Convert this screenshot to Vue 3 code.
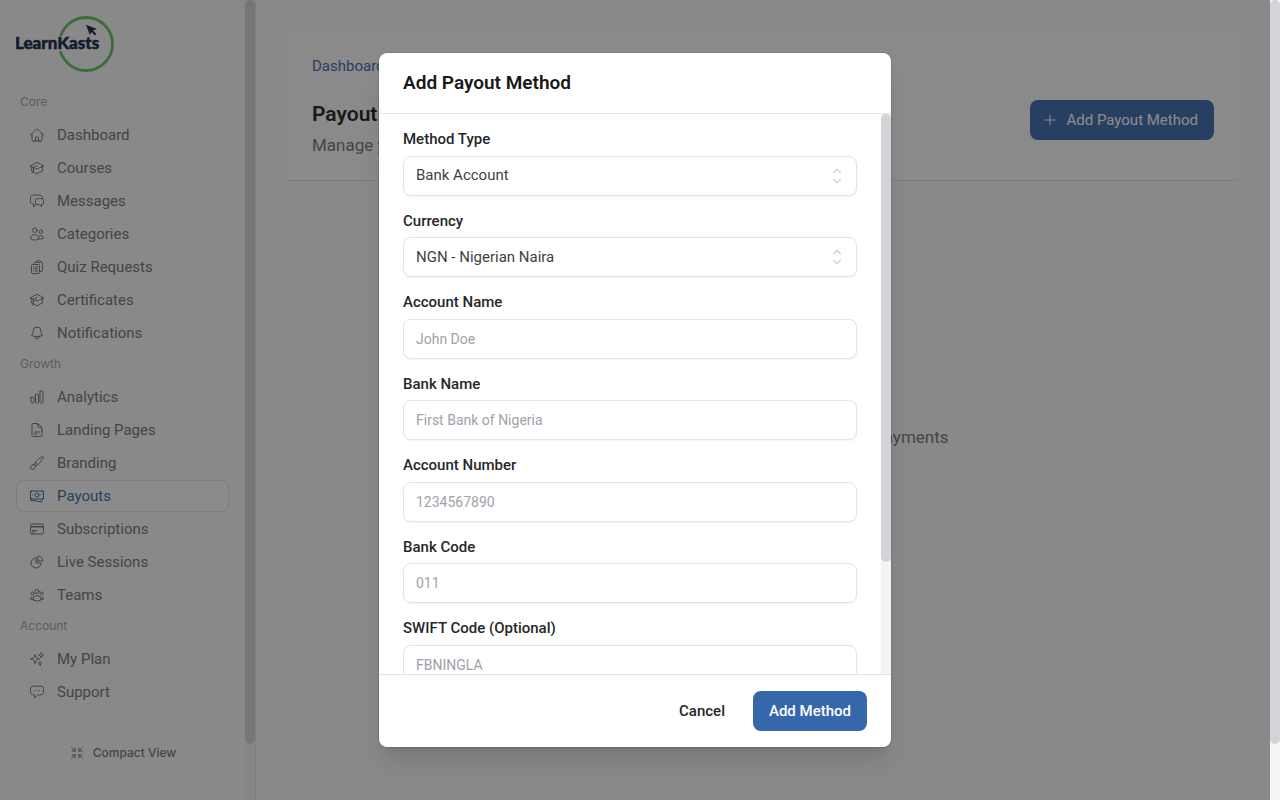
<template>
  <div class="shell">
    <div class="viewport">
      <aside class="sidebar">
        <div class="sidebar-content">
          <a href="#" class="logo" aria-label="LearnKasts">
            <svg width="98" height="56" viewBox="0 0 98 56">
              <circle cx="70" cy="28" r="26.500" fill="none" stroke="#5fc25f" stroke-width="2.800" />
              <rect x="41" y="20" width="6" height="15" fill="#ffffff" />
              <text x="-1" y="33" class="logo-text">LearnKasts</text>
              <path d="M70 8.800 81 13l-4.100 1.500 3.500 3.600-1.500 1.500-3.600-3.500-1.400 3.100z" fill="#0f1f47" />
            </svg>
          </a>

          <nav class="nav">
            <template v-for="group in groups" :key="group.title">
              <h2 class="nav-heading">{{ group.title }}</h2>
              <a
                v-for="item in group.items"
                :key="item.label"
                href="#"
                class="nav-item"
                :class="{ active: item.label === 'Payouts' }"
              >
                <svg class="icon" viewBox="0 0 24 24">
                  <path :d="icons[item.icon]" />
                </svg>
                <span>{{ item.label }}</span>
              </a>
            </template>
          </nav>

          <button type="button" class="compact">
            <svg class="icon" viewBox="0 0 24 24">
              <path d="M9 9V4.500M9 9H4.500M9 9 3.750 3.750M9 15v4.500M9 15H4.500M9 15l-5.250 5.250M15 9h4.500M15 9V4.500M15 9l5.250-5.250M15 15h4.500M15 15v4.500m0-4.500 5.250 5.250" />
            </svg>
            <span>Compact View</span>
          </button>
        </div>
        <div class="scrollbar" aria-hidden="true"><div class="thumb thumb-sidebar"></div></div>
      </aside>

      <main class="main">
        <header class="page-header">
          <a href="#" class="breadcrumb">Dashboard</a>
          <div class="page-row">
            <div>
              <h1>Payout Methods</h1>
              <p>Manage your payout methods</p>
            </div>
            <button type="button" class="btn btn-primary btn-icon">
              <svg class="icon" viewBox="0 0 24 24"><path d="M12 4.500v15m7.500-7.500h-15" /></svg>
              <span>Add Payout Method</span>
            </button>
          </div>
        </header>
        <p class="empty">Add a payout method to start receiving payments</p>
      </main>

      <div class="backdrop">
        <form class="modal" role="dialog" aria-labelledby="modal-title" @submit.prevent>
          <header class="modal-header">
            <h2 id="modal-title">Add Payout Method</h2>
          </header>

          <div class="modal-scroll">
            <div class="modal-body">
              <div v-for="field in selects" :key="field.id" class="field">
                <label :for="field.id">{{ field.label }}</label>
                <div class="select">
                  <select :id="field.id" v-model="form[field.id]">
                    <option v-for="option in field.options" :key="option">{{ option }}</option>
                  </select>
                  <svg class="chevrons" viewBox="0 0 24 24">
                    <path d="M8.250 15 12 18.750 15.750 15m-7.500-6L12 5.250 15.750 9" />
                  </svg>
                </div>
              </div>
              <div v-for="field in fields" :key="field.id" class="field">
                <label :for="field.id">{{ field.label }}</label>
                <input :id="field.id" v-model="form[field.id]" type="text" :placeholder="field.placeholder" />
              </div>
            </div>
            <div class="scrollbar" aria-hidden="true"><div class="thumb thumb-modal"></div></div>
          </div>

          <footer class="modal-footer">
            <button type="button" class="btn btn-ghost">Cancel</button>
            <button type="submit" class="btn btn-primary">Add Method</button>
          </footer>
        </form>
      </div>
    </div>
    <div class="scrollbar" aria-hidden="true"><div class="thumb thumb-page"></div></div>
  </div>
</template>

<script setup>
import { reactive } from 'vue'

const form = reactive({
  method: 'Bank Account',
  currency: 'NGN - Nigerian Naira',
})

const selects = [
  { id: 'method', label: 'Method Type', options: ['Bank Account'] },
  { id: 'currency', label: 'Currency', options: ['NGN - Nigerian Naira'] },
]

const fields = [
  { id: 'accountName', label: 'Account Name', placeholder: 'John Doe' },
  { id: 'bankName', label: 'Bank Name', placeholder: 'First Bank of Nigeria' },
  { id: 'accountNumber', label: 'Account Number', placeholder: '1234567890' },
  { id: 'bankCode', label: 'Bank Code', placeholder: '011' },
  { id: 'swift', label: 'SWIFT Code (Optional)', placeholder: 'FBNINGLA' },
]

const groups = [
  {
    title: 'Core',
    items: [
      { label: 'Dashboard', icon: 'home' },
      { label: 'Courses', icon: 'cap' },
      { label: 'Messages', icon: 'chat' },
      { label: 'Categories', icon: 'users' },
      { label: 'Quiz Requests', icon: 'clipboard' },
      { label: 'Certificates', icon: 'cap' },
      { label: 'Notifications', icon: 'bell' },
    ],
  },
  {
    title: 'Growth',
    items: [
      { label: 'Analytics', icon: 'chart' },
      { label: 'Landing Pages', icon: 'document' },
      { label: 'Branding', icon: 'brush' },
      { label: 'Payouts', icon: 'banknotes' },
      { label: 'Subscriptions', icon: 'card' },
      { label: 'Live Sessions', icon: 'pie' },
      { label: 'Teams', icon: 'team' },
    ],
  },
  {
    title: 'Account',
    items: [
      { label: 'My Plan', icon: 'sparkles' },
      { label: 'Support', icon: 'bubble' },
    ],
  },
]

const icons = {
  home: 'm2.25 12 8.954-8.955c.44-.439 1.152-.439 1.591 0L21.75 12M4.5 9.75v10.125c0 .621.504 1.125 1.125 1.125H9.75v-4.875c0-.621.504-1.125 1.125-1.125h2.25c.621 0 1.125.504 1.125 1.125V21h4.125c.621 0 1.125-.504 1.125-1.125V9.75M8.25 21h8.25',
  cap: 'M4.26 10.147a60.438 60.438 0 0 0-.491 6.347A48.62 48.62 0 0 1 12 20.904a48.62 48.62 0 0 1 8.232-4.41 60.46 60.46 0 0 0-.491-6.347m-15.482 0a50.636 50.636 0 0 0-2.658-.813A59.906 59.906 0 0 1 12 3.493a59.903 59.903 0 0 1 10.399 5.84c-.896.248-1.783.52-2.658.814m-15.482 0A50.717 50.717 0 0 1 12 13.489a50.702 50.702 0 0 1 7.74-3.342M6.75 15a.75.75 0 1 0 0-1.5.75.75 0 0 0 0 1.5Zm0 0v-3.675A55.378 55.378 0 0 1 12 8.443m-7.007 11.55A5.981 5.981 0 0 0 6.75 15.75v-1.5',
  chat: 'M20.25 8.511c.884.284 1.5 1.128 1.5 2.097v4.286c0 1.136-.847 2.1-1.98 2.193-.34.027-.68.052-1.02.072v3.091l-3-3c-1.354 0-2.694-.055-4.02-.163a2.115 2.115 0 0 1-.825-.242m9.345-8.334a2.126 2.126 0 0 0-.476-.095 48.64 48.64 0 0 0-8.048 0c-1.131.094-1.976 1.057-1.976 2.192v4.286c0 .837.46 1.58 1.155 1.951m9.345-8.334V6.637c0-1.621-1.152-3.026-2.76-3.235A48.455 48.455 0 0 0 11.25 3c-2.115 0-4.198.137-6.24.402-1.608.209-2.76 1.614-2.76 3.235v6.226c0 1.621 1.152 3.026 2.76 3.235.577.075 1.157.14 1.74.194V21l4.155-4.155',
  users: 'M15 19.128a9.38 9.38 0 0 0 2.625.372 9.337 9.337 0 0 0 4.121-.952 4.125 4.125 0 0 0-7.533-2.493M15 19.128v-.003c0-1.113-.285-2.16-.786-3.07M15 19.128v.106A12.318 12.318 0 0 1 8.624 21c-2.331 0-4.512-.645-6.374-1.766l-.001-.109a6.375 6.375 0 0 1 11.964-3.07M12 6.375a3.375 3.375 0 1 1-6.75 0 3.375 3.375 0 0 1 6.75 0Zm8.25 2.25a2.625 2.625 0 1 1-5.25 0 2.625 2.625 0 0 1 5.25 0Z',
  clipboard: 'M9 12h3.75M9 15h3.75M9 18h3.75m3 .75H18a2.25 2.25 0 0 0 2.25-2.25V6.108c0-1.135-.845-2.098-1.976-2.192a48.424 48.424 0 0 0-1.123-.08m-5.801 0c-.065.21-.1.433-.1.664 0 .414.336.75.75.75h4.5a.75.75 0 0 0 .75-.75 2.25 2.25 0 0 0-.1-.664m-5.8 0A2.251 2.251 0 0 1 13.5 2.25H15c1.012 0 1.867.668 2.15 1.586m-5.8 0c-.376.023-.75.05-1.124.08C9.095 4.01 8.25 4.973 8.25 6.108V8.25m0 0H4.875c-.621 0-1.125.504-1.125 1.125v11.25c0 .621.504 1.125 1.125 1.125h9.75c.621 0 1.125-.504 1.125-1.125V9.375c0-.621-.504-1.125-1.125-1.125H8.25ZM6.75 12h.008v.008H6.75V12Zm0 3h.008v.008H6.75V15Zm0 3h.008v.008H6.75V18Z',
  bell: 'M14.857 17.082a23.848 23.848 0 0 0 5.454-1.31A8.967 8.967 0 0 1 18 9.75V9A6 6 0 0 0 6 9v.75a8.967 8.967 0 0 1-2.312 6.022c1.733.64 3.56 1.085 5.455 1.31m5.714 0a24.255 24.255 0 0 1-5.714 0m5.714 0a3 3 0 1 1-5.714 0',
  chart: 'M3 13.125C3 12.504 3.504 12 4.125 12h2.25c.621 0 1.125.504 1.125 1.125v6.75C7.5 20.496 6.996 21 6.375 21h-2.25A1.125 1.125 0 0 1 3 19.875v-6.75ZM9.75 8.625c0-.621.504-1.125 1.125-1.125h2.25c.621 0 1.125.504 1.125 1.125v11.25c0 .621-.504 1.125-1.125 1.125h-2.25a1.125 1.125 0 0 1-1.125-1.125V8.625ZM16.5 4.125c0-.621.504-1.125 1.125-1.125h2.25C20.496 3 21 3.504 21 4.125v15.75c0 .621-.504 1.125-1.125 1.125h-2.25a1.125 1.125 0 0 1-1.125-1.125V4.125Z',
  document: 'M19.5 14.25v-2.625a3.375 3.375 0 0 0-3.375-3.375h-1.5A1.125 1.125 0 0 1 13.5 7.125v-1.5a3.375 3.375 0 0 0-3.375-3.375H8.25m0 12.75h7.5m-7.5 3H12M10.5 2.25H5.625c-.621 0-1.125.504-1.125 1.125v17.25c0 .621.504 1.125 1.125 1.125h12.75c.621 0 1.125-.504 1.125-1.125V11.25a9 9 0 0 0-9-9Z',
  brush: 'M9.53 16.122a3 3 0 0 0-5.78 1.128 2.25 2.25 0 0 1-2.4 2.245 4.5 4.5 0 0 0 8.4-2.245c0-.399-.078-.78-.22-1.128Zm0 0a15.998 15.998 0 0 0 3.388-1.62m-5.043-.025a15.994 15.994 0 0 1 1.622-3.395m3.42 3.42a15.995 15.995 0 0 0 4.764-4.648l3.876-5.814a1.151 1.151 0 0 0-1.597-1.597L14.146 6.32a15.996 15.996 0 0 0-4.649 4.763m3.42 3.42a6.776 6.776 0 0 0-3.42-3.42',
  banknotes: 'M2.25 18.75a60.07 60.07 0 0 1 15.797 2.101c.727.198 1.453-.342 1.453-1.096V18.75M3.75 4.5v.75A.75.75 0 0 1 3 6h-.75m0 0v-.375c0-.621.504-1.125 1.125-1.125H20.25M2.25 6v9m18-10.5v.75c0 .414.336.75.75.75h.75m-1.5-1.5h.375c.621 0 1.125.504 1.125 1.125v9.75c0 .621-.504 1.125-1.125 1.125h-.375m1.5-1.5H21a.75.75 0 0 0-.75.75v.75m0 0H3.75m0 0h-.375a1.125 1.125 0 0 1-1.125-1.125V15m1.5 1.5v-.75A.75.75 0 0 0 3 15h-.75M15 10.5a3 3 0 1 1-6 0 3 3 0 0 1 6 0Zm3 0h.008v.008H18V10.5Zm-12 0h.008v.008H6V10.5Z',
  card: 'M2.25 8.25h19.5M2.25 9h19.5m-16.5 5.25h6m-6 2.25h3m-3.75 3h15a2.25 2.25 0 0 0 2.25-2.25V6.75A2.25 2.25 0 0 0 19.5 4.5h-15a2.25 2.25 0 0 0-2.25 2.25v10.5A2.25 2.25 0 0 0 4.5 19.5Z',
  pie: 'M10.5 6a7.5 7.5 0 1 0 7.5 7.5h-7.5V6ZM13.5 10.5H21A7.5 7.5 0 0 0 13.5 3v7.5Z',
  team: 'M18 18.72a9.094 9.094 0 0 0 3.741-.479 3 3 0 0 0-4.682-2.72m.94 3.198.001.031c0 .225-.012.447-.037.666A11.944 11.944 0 0 1 12 21c-2.17 0-4.207-.576-5.963-1.584A6.062 6.062 0 0 1 6 18.719m12 0a5.971 5.971 0 0 0-.941-3.197m0 0A5.995 5.995 0 0 0 12 12.75a5.995 5.995 0 0 0-5.058 2.772m0 0a3 3 0 0 0-4.681 2.72 8.986 8.986 0 0 0 3.74.477m.94-3.197a5.971 5.971 0 0 0-.94 3.197M15 6.75a3 3 0 1 1-6 0 3 3 0 0 1 6 0Zm6 3a2.25 2.25 0 1 1-4.5 0 2.25 2.25 0 0 1 4.5 0Zm-13.5 0a2.25 2.25 0 1 1-4.5 0 2.25 2.25 0 0 1 4.5 0Z',
  sparkles: 'M9.813 15.904 9 18.75l-.813-2.846a4.5 4.5 0 0 0-3.09-3.09L2.25 12l2.846-.813a4.5 4.5 0 0 0 3.09-3.09L9 5.25l.813 2.846a4.5 4.5 0 0 0 3.09 3.09L15.75 12l-2.846.813a4.5 4.5 0 0 0-3.09 3.09ZM18.259 8.715 18 9.75l-.259-1.035a3.375 3.375 0 0 0-2.455-2.456L14.25 6l1.036-.259a3.375 3.375 0 0 0 2.455-2.456L18 2.25l.259 1.035a3.375 3.375 0 0 0 2.456 2.456L21.75 6l-1.035.259a3.375 3.375 0 0 0-2.456 2.456ZM16.894 20.567 16.5 21.75l-.394-1.183a2.25 2.25 0 0 0-1.423-1.423L13.5 18.75l1.183-.394a2.25 2.25 0 0 0 1.423-1.423l.394-1.183.394 1.183a2.25 2.25 0 0 0 1.423 1.423l1.183.394-1.183.394a2.25 2.25 0 0 0-1.423 1.423Z',
  bubble: 'M8.25 10h.1M12 10h.1M15.75 10h.1M2.25 12.76c0 1.6 1.123 2.994 2.707 3.227 1.087.16 2.185.283 3.293.369V21l4.076-4.076a1.526 1.526 0 0 1 1.037-.443 48.282 48.282 0 0 0 5.68-.494c1.584-.233 2.707-1.626 2.707-3.228V6.741c0-1.602-1.123-2.995-2.707-3.228A48.394 48.394 0 0 0 12 3c-2.392 0-4.744.175-7.043.513C3.373 3.746 2.25 5.14 2.25 6.741v6.018Z',
}
</script>

<style>
body {
  background: #fafafa;
}
</style>

<style scoped>
.shell {
  display: flex;
  height: 100vh;
  overflow: hidden;
  font-family: Roboto, 'Liberation Sans', sans-serif;
  font-size: 15px;
  line-height: 1.5;
  color: #27272a;
}

.shell * {
  box-sizing: border-box;
}

.viewport {
  position: relative;
  display: flex;
  flex: 1;
  min-width: 0;
}

h1,
h2,
p {
  margin: 0;
}

a {
  text-decoration: none;
}

button,
input,
select {
  font: inherit;
}

.icon {
  width: 16px;
  height: 16px;
  flex: none;
  fill: none;
  stroke: currentColor;
  stroke-width: 1.5;
  stroke-linecap: round;
  stroke-linejoin: round;
}

.scrollbar {
  width: 10px;
  flex: none;
  background: #f4f4f5;
}

.thumb {
  border-radius: 5px;
  background: #d4d4d8;
}

.thumb-page,
.thumb-sidebar {
  height: 93%;
}

.thumb-modal {
  height: 80%;
}

.sidebar {
  display: flex;
  width: 256px;
  flex: none;
  border-right: 1px solid #e4e4e7;
}

.sidebar-content {
  display: flex;
  flex: 1;
  flex-direction: column;
  gap: 16px;
  padding: 16px;
  overflow-y: auto;
  scrollbar-width: none;
}

.logo {
  height: 56px;
  flex: none;
}

.logo-text {
  font-family: Lato, sans-serif;
  font-weight: 900;
  font-size: 17px;
  fill: #0f1f47;
  stroke: #0f1f47;
  stroke-width: 0.5;
}

.nav {
  display: flex;
  flex-direction: column;
  gap: 1px;
}

.nav-heading {
  height: 30px;
  padding: 5px 4px;
  font-family: Inter, sans-serif;
  font-size: 12px;
  line-height: 18px;
  font-weight: 400;
  color: #a1a1aa;
}

.nav-item {
  display: flex;
  align-items: center;
  gap: 12px;
  height: 32px;
  padding: 0 12px;
  border: 1px solid transparent;
  border-radius: 8px;
  color: #71717a;
}

.nav-item.active {
  background: #ffffff;
  border-color: #e4e4e7;
  color: #3767ab;
}

.compact {
  display: flex;
  align-items: center;
  justify-content: center;
  gap: 8px;
  height: 32px;
  flex: none;
  margin-top: 13px;
  padding: 0;
  border: none;
  background: none;
  font-family: Inter, sans-serif;
  font-size: 12px;
  font-weight: 500;
  color: #71717a;
}

.main {
  flex: 1;
  min-width: 0;
  padding: 32px;
}

.page-header {
  padding: 23px 24px;
  background: #fcfcfc;
  border-bottom: 1px solid #e4e4e7;
}

.breadcrumb {
  display: block;
  line-height: 22px;
  color: #3767ab;
}

.page-row {
  display: flex;
  justify-content: space-between;
  align-items: flex-start;
  margin-top: 23px;
}

.page-row h1 {
  font-size: 21px;
  line-height: 28px;
  font-weight: 600;
  color: #18181b;
}

.page-row p {
  margin-top: 5px;
  font-size: 17px;
  line-height: 24px;
  color: #71717a;
}

.empty {
  margin-top: 244px;
  font-size: 17px;
  line-height: 24px;
  text-align: center;
  color: #71717a;
}

.btn {
  height: 40px;
  padding: 0 16px;
  border: none;
  border-radius: 8px;
  font-weight: 500;
  cursor: pointer;
}

.btn-primary {
  background: #3767ab;
  color: #ffffff;
}

.btn-ghost {
  background: transparent;
  color: #27272a;
}

.btn-icon {
  display: flex;
  align-items: center;
  gap: 8px;
  padding-left: 12px;
  font-weight: 400;
}

.backdrop {
  position: absolute;
  inset: 0;
  display: flex;
  align-items: center;
  justify-content: center;
  background: rgba(23, 23, 23, 0.5);
}

.modal {
  width: 512px;
  max-width: 100%;
  overflow: hidden;
  background: #ffffff;
  border-radius: 8px;
  box-shadow: 0 0 0 1px rgba(24, 24, 27, 0.1), 0 20px 25px -5px rgba(0, 0, 0, 0.1), 0 8px 10px -6px rgba(0, 0, 0, 0.1);
}

.modal-header {
  padding: 16px 24px;
  border-bottom: 1px solid #e4e4e7;
}

.modal-header h2 {
  font-size: 19px;
  line-height: 28px;
  font-weight: 600;
  color: #18181b;
}

.modal-scroll {
  display: flex;
  height: 70vh;
}

.modal-body {
  display: flex;
  flex: 1;
  flex-direction: column;
  gap: 14px;
  padding: 14px 24px;
  overflow-y: auto;
  scrollbar-width: none;
}

.field {
  display: flex;
  flex-direction: column;
  flex: none;
  gap: 5px;
}

.field label {
  font-weight: 500;
}

.field input,
.field select {
  display: block;
  width: 100%;
  height: 40px;
  padding: 0 12px;
  border: 1px solid #e4e4e7;
  border-radius: 8px;
  background: #ffffff;
  box-shadow: 0 1px 2px rgba(0, 0, 0, 0.05);
  color: #3f3f46;
  appearance: none;
}

.field input {
  font-size: 14px;
}

.field input::placeholder {
  color: #a1a1aa;
}

.select {
  position: relative;
}

.chevrons {
  position: absolute;
  top: 8px;
  right: 8px;
  width: 24px;
  height: 24px;
  fill: none;
  stroke: #d4d4d8;
  stroke-width: 1.25;
  pointer-events: none;
}

.modal-footer {
  display: flex;
  justify-content: flex-end;
  gap: 12px;
  padding: 16px 24px;
  border-top: 1px solid #e4e4e7;
}
</style>
